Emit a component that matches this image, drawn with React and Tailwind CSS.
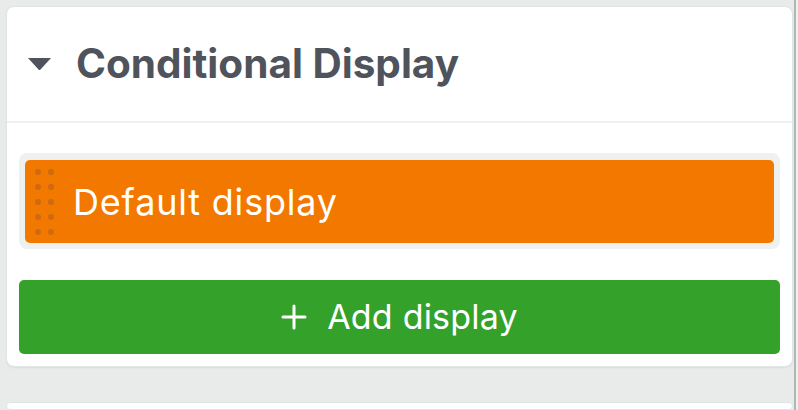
import React from "react";

const Dots = () => (
  <div className="grid grid-cols-2 gap-x-[7px] gap-y-[9px] py-[10px]">
    {Array.from({ length: 10 }).map((_, i) => (
      <span key={i} className="w-[6px] h-[6px] rounded-full bg-[#cf6a12]" />
    ))}
  </div>
);

const App = () => {
  return (
    <div
      className="flex w-[798px] h-[410px] overflow-hidden bg-[#e8ebea]"
      style={{ fontFamily: "Inter, 'Noto Sans', sans-serif" }}
    >
      <div className="flex-1 flex flex-col gap-[35px] pl-[6px] pt-[6px] pr-[1px]">
        {/* Conditional display card */}
        <div className="bg-white border border-[#dde5e5] rounded-lg shadow-[0_1px_2px_rgba(0,0,0,0.06)]">
          <div className="h-[114px] flex items-center pl-[20px]">
            <svg width="25" height="14" viewBox="0 0 25 14" className="mr-[24px]">
              <path d="M1 1 L24 1 L13.5 12.5 Q12.5 13.6 11.5 12.5 Z" fill="#4f535c" />
            </svg>
            <h2 className="text-[40.5px] font-bold text-[#4f535c] leading-none">
              Conditional Display
            </h2>
          </div>
          <div className="h-[2px] bg-[#eef0f0]" />
          <div className="px-[12px] pt-[30px] pb-[12px] flex flex-col gap-[31px]">
            <div className="bg-[#eff1f1] rounded-lg p-[6px] pt-[7px]">
              <div className="h-[83px] bg-[#f27800] rounded-[5px] flex items-center pl-[10px]">
                <Dots />
                <span className="ml-[19px] text-[36px] tracking-[0.8px] text-white leading-none">
                  Default display
                </span>
              </div>
            </div>
            <button className="h-[74px] w-full bg-[#34a12b] rounded-[5px] flex items-center justify-center gap-[20px] text-white">
              <svg width="26" height="26" viewBox="0 0 26 26">
                <path d="M13 2 V24 M2 13 H24" stroke="white" strokeWidth="3" strokeLinecap="round" />
              </svg>
              <span className="text-[34px] tracking-[0.2px] leading-none">Add display</span>
            </button>
          </div>
        </div>
        {/* Next card (cut off) */}
        <div className="h-[40px] bg-white border border-[#dde5e5] rounded-lg" />
      </div>
      <div className="w-[2px] bg-[#b3b6b6]" />
      <div className="w-[2px] bg-[#eef0f0]" />
    </div>
  );
};

export default App;
